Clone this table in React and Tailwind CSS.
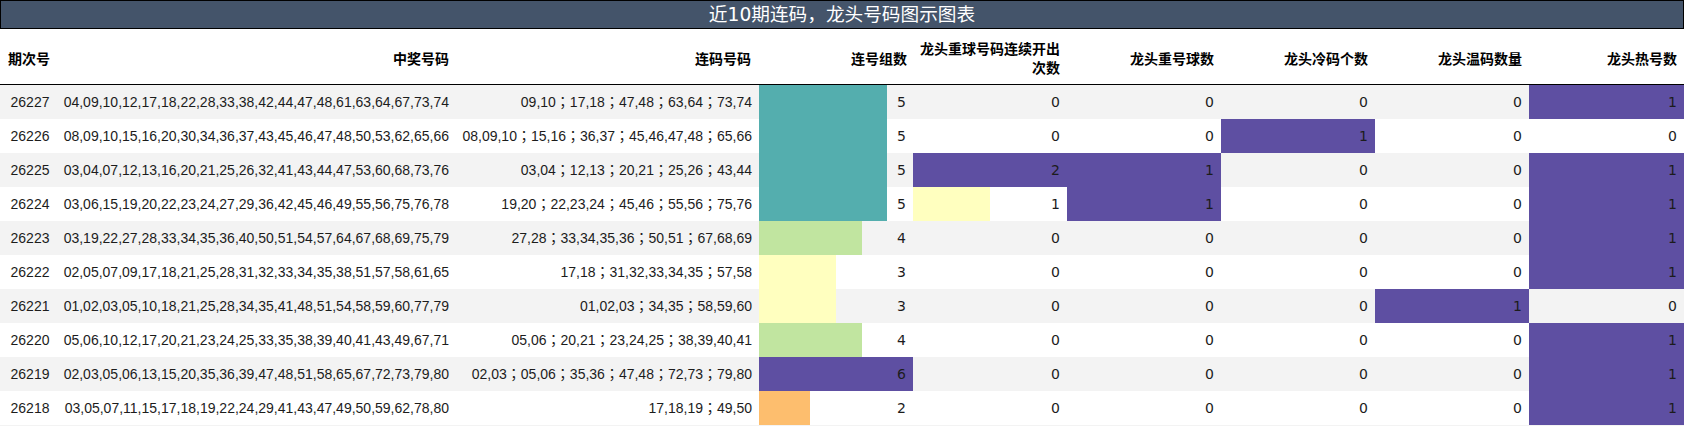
import React from "react";

const rows = [
  ["26227", "04,09,10,12,17,18,22,28,33,38,42,44,47,48,61,63,64,67,73,74", "09,10；17,18；47,48；63,64；73,74", 5, 0, 0, 0, 0, 1],
  ["26226", "08,09,10,15,16,20,30,34,36,37,43,45,46,47,48,50,53,62,65,66", "08,09,10；15,16；36,37；45,46,47,48；65,66", 5, 0, 0, 1, 0, 0],
  ["26225", "03,04,07,12,13,16,20,21,25,26,32,41,43,44,47,53,60,68,73,76", "03,04；12,13；20,21；25,26；43,44", 5, 2, 1, 0, 0, 1],
  ["26224", "03,06,15,19,20,22,23,24,27,29,36,42,45,46,49,55,56,75,76,78", "19,20；22,23,24；45,46；55,56；75,76", 5, 1, 1, 0, 0, 1],
  ["26223", "03,19,22,27,28,33,34,35,36,40,50,51,54,57,64,67,68,69,75,79", "27,28；33,34,35,36；50,51；67,68,69", 4, 0, 0, 0, 0, 1],
  ["26222", "02,05,07,09,17,18,21,25,28,31,32,33,34,35,38,51,57,58,61,65", "17,18；31,32,33,34,35；57,58", 3, 0, 0, 0, 0, 1],
  ["26221", "01,02,03,05,10,18,21,25,28,34,35,41,48,51,54,58,59,60,77,79", "01,02,03；34,35；58,59,60", 3, 0, 0, 0, 1, 0],
  ["26220", "05,06,10,12,17,20,21,23,24,25,33,35,38,39,40,41,43,49,67,71", "05,06；20,21；23,24,25；38,39,40,41", 4, 0, 0, 0, 0, 1],
  ["26219", "02,03,05,06,13,15,20,35,36,39,47,48,51,58,65,67,72,73,79,80", "02,03；05,06；35,36；47,48；72,73；79,80", 6, 0, 0, 0, 0, 1],
  ["26218", "03,05,07,11,15,17,18,19,22,24,29,41,43,47,49,50,59,62,78,80", "17,18,19；49,50", 2, 0, 0, 0, 0, 1],
];

const groupColors = {
  2: "#fdbe6e",
  3: "#ffffbf",
  4: "#c1e5a0",
  5: "#54aeae",
  6: "#5e4fa2",
};
const repeatColors = { 1: "#ffffbf", 2: "#5e4fa2" };

const sansStack = { fontFamily: '"Liberation Sans", "Noto Sans CJK TC", sans-serif' };
const numStack = { fontFamily: '"DejaVu Sans", "Liberation Sans", sans-serif' };
const cjkStack = { fontFamily: '"Liberation Sans", "Noto Sans CJK SC", sans-serif' };

function BarCell({ value, max, color }) {
  return (
    <div className="relative w-[154px] h-full flex items-center justify-end pr-[7px]">
      {value > 0 && (
        <div
          className="absolute left-0 top-0 bottom-0"
          style={{ width: `${(value / max) * 100}%`, backgroundColor: color }}
        />
      )}
      <span className="relative">{value}</span>
    </div>
  );
}

function FlagCell({ value, last }) {
  return (
    <div
      className={`${last ? "w-[155px]" : "w-[154px]"} h-full flex items-center justify-end pr-[7px] ${value === 1 ? "bg-[#5e4fa2]" : ""}`}
    >
      {value}
    </div>
  );
}

export default function App() {
  return (
    <div className="w-[1684px] bg-white text-[#1c1c1c] text-[14px]" style={cjkStack}>
      <div
        className="h-[29px] border border-black bg-[#44546a] text-white text-[18.67px] flex items-center justify-center"
        style={{ fontFamily: '"DejaVu Sans", "Noto Sans CJK SC", sans-serif' }}
      >
        近10期连码，龙头号码图示图表
      </div>
      <div className="h-[56px] flex border-b border-black font-bold text-black">
        <div className="w-[60px] flex items-center pl-2 pt-[5px]">期次号</div>
        <div className="w-[396px] flex items-center justify-end pr-[7px] pt-[5px]">中奖号码</div>
        <div className="w-[303px] flex items-center justify-end pr-[8px] pt-[5px]">连码号码</div>
        <div className="w-[154px] flex items-center justify-end pr-[6px] pt-[5px]">连号组数</div>
        <div className="w-[154px] flex items-center justify-end pr-[7px] pt-[5px] text-right leading-[19px]">
          <span>
            龙头重球号码连续开出
            <br />
            次数
          </span>
        </div>
        <div className="w-[154px] flex items-center justify-end pr-[7px] pt-[5px]">龙头重号球数</div>
        <div className="w-[154px] flex items-center justify-end pr-[7px] pt-[5px]">龙头冷码个数</div>
        <div className="w-[154px] flex items-center justify-end pr-[7px] pt-[5px]">龙头温码数量</div>
        <div className="w-[155px] flex items-center justify-end pr-[7px] pt-[5px]">龙头热号数</div>
      </div>
      {rows.map((r, i) => (
        <div key={r[0]} className={`h-[34px] flex ${i % 2 === 0 ? "bg-[#f3f3f3]" : "bg-white"}`}>
          <div className="w-[60px] flex items-center justify-center" style={sansStack}>{r[0]}</div>
          <div className="w-[396px] flex items-center justify-end pr-[7px]" style={sansStack}>{r[1]}</div>
          <div className="w-[303px] flex items-center justify-end pr-[7px] whitespace-nowrap" style={sansStack}>{r[2]}</div>
          <div style={numStack} className="flex">
            <BarCell value={r[3]} max={6} color={groupColors[r[3]]} />
            <BarCell value={r[4]} max={2} color={repeatColors[r[4]]} />
            <FlagCell value={r[5]} />
            <FlagCell value={r[6]} />
            <FlagCell value={r[7]} />
            <FlagCell value={r[8]} last />
          </div>
        </div>
      ))}
      <div className="h-px bg-[#f3f3f3]" />
    </div>
  );
}
